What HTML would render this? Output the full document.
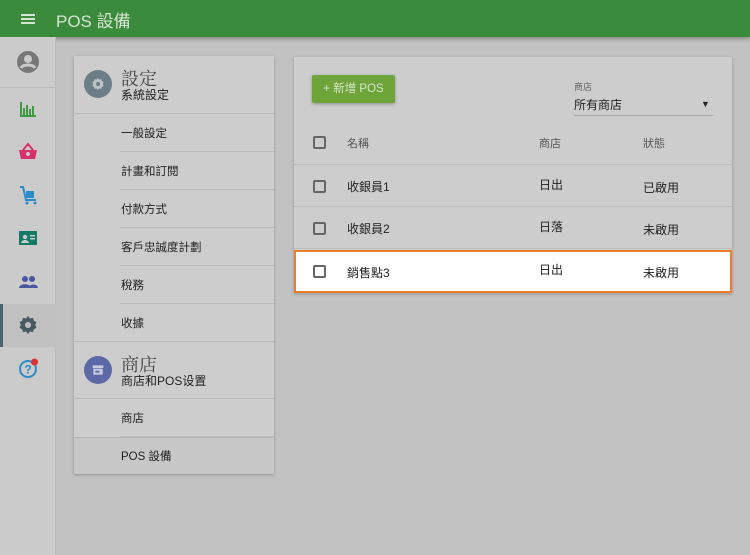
<!DOCTYPE html>
<html><head><meta charset="utf-8"><style>
*{box-sizing:border-box;margin:0;padding:0}
body{width:750px;height:555px;overflow:hidden;background:#c2c2c2;font-family:"Liberation Sans","Noto Sans CJK TC",sans-serif;color:#222;position:relative}
.hdr{position:absolute;left:0;top:0;width:750px;height:37px;background:#3a8b3c;box-shadow:0 2px 4px rgba(0,0,0,.3)}
.hdr .t{position:absolute;left:56px;top:7px;font-size:17px;color:#d7e6d3}
.side{position:absolute;left:0;top:37px;width:56px;height:518px;background:#cbcbcb;border-right:1px solid #bdbdbd}
.ic{position:absolute;left:16px;width:24px;height:24px}
.card{position:absolute;background:#cdcdcd;box-shadow:0 1px 3px rgba(0,0,0,.25)}
.sec{position:absolute;left:0;width:200px;height:58px;border-bottom:1px solid #bababa}
.sec .circ{position:absolute;left:10px;top:14px;width:28px;height:28px;border-radius:50%}
.sec .h{position:absolute;left:47px;top:9px;font-size:18px;color:#444;font-family:"Liberation Serif","Noto Serif CJK SC",serif}
.sec .s{position:absolute;left:47px;top:30px;font-size:12px;color:#222}
.it{position:absolute;left:46px;width:154px;height:38px;border-bottom:1px solid #bababa;font-size:11.5px;padding:11px 0 0 1px}
.cb{position:absolute;left:19px;width:13px;height:13px;border:2px solid #666;border-radius:2px}
.row{position:absolute;left:0;width:438px;height:42px;border-bottom:1px solid #bcbcbc;font-size:12px}
.row span{position:absolute}
</style></head><body>
<div class="hdr">
<div style="position:absolute;left:21px;top:14px;width:14px;height:2px;background:#d7e6d3;box-shadow:0 4px 0 #d7e6d3,0 8px 0 #d7e6d3"></div>
<div class="t">POS 設備</div></div>
<div class="side">
<svg class="ic" style="top:13px" viewBox="0 0 24 24"><circle cx="12" cy="12" r="11" fill="#777"/><circle cx="12" cy="9" r="4" fill="#cbcbcb"/><path d="M5 18c2-4 12-4 14 0" stroke="#cbcbcb" stroke-width="3" fill="none"/></svg>
<div style="position:absolute;left:0;top:50px;width:56px;border-top:1px solid #bbb"></div>
<svg class="ic" style="top:60px" viewBox="0 0 24 24"><path d="M5 5v14h15M8 11v7M11 8v10M14 12v6M17 9v9" stroke="#3e9b44" stroke-width="2" fill="none"/></svg>
<svg class="ic" style="top:103px" viewBox="0 0 24 24"><path d="M3 10h18l-2 9H5z" fill="#d8306a"/><path d="M7 10l5-6 5 6" stroke="#d8306a" stroke-width="2" fill="none"/><circle cx="12" cy="14" r="2" fill="#cbcbcb"/></svg>
<svg class="ic" style="top:146px" viewBox="0 0 24 24"><path d="M4 4h3l3 13h10" stroke="#2a8bc8" stroke-width="2" fill="none"/><rect x="10" y="8" width="8" height="7" fill="#2a8bc8"/><circle cx="11" cy="20" r="1.5" fill="#2a8bc8"/><circle cx="19" cy="20" r="1.5" fill="#2a8bc8"/></svg>
<svg class="ic" style="top:189px" viewBox="0 0 24 24"><rect x="3" y="5" width="18" height="14" fill="#137a66"/><circle cx="9" cy="11" r="2.2" fill="#cbcbcb"/><path d="M5 17c1-4 7-4 8 0z" fill="#cbcbcb"/><rect x="14" y="9" width="5" height="1.5" fill="#cbcbcb"/><rect x="14" y="12" width="5" height="1.5" fill="#cbcbcb"/></svg>
<svg class="ic" style="top:233px" viewBox="0 0 24 24"><circle cx="9" cy="9" r="3" fill="#4b55a0"/><circle cx="16" cy="9" r="3" fill="#4b55a0"/><path d="M3 18c0-5 12-5 12 0zM12 18c0-4 10-5 10 0z" fill="#4b55a0"/></svg>
<div style="position:absolute;left:0;top:267px;width:56px;height:43px;background:#c0c0c0;border-left:3px solid #4a6470"></div>
<svg class="ic" style="top:276px" viewBox="0 0 24 24"><path d="M12 3l2 2.5 3-.8.8 3 2.7 1.4-1.3 2.9 1.3 2.9-2.7 1.4-.8 3-3-.8L12 21l-2-2.5-3 .8-.8-3L3.5 14.9l1.3-2.9-1.3-2.9 2.7-1.4.8-3 3 .8z" fill="#4a5a62"/><circle cx="12" cy="12" r="3" fill="#c0c0c0"/></svg>
<svg class="ic" style="top:319px" viewBox="0 0 24 24"><circle cx="12" cy="13" r="8" stroke="#2a8bc8" stroke-width="2" fill="none"/><text x="12" y="17.5" text-anchor="middle" font-size="12" font-weight="bold" fill="#2a8bc8" font-family="Liberation Sans">?</text><circle cx="18.5" cy="6" r="3.5" fill="#d33"/></svg>
</div>
<div class="card" style="left:74px;top:56px;width:200px;height:418px">
<div class="sec" style="top:0"><div class="circ" style="background:#6c7e86"><svg viewBox="0 0 24 24" width="16" height="16" style="margin:6px"><path d="M12 3l2 2.5 3-.8.8 3 2.7 1.4-1.3 2.9 1.3 2.9-2.7 1.4-.8 3-3-.8L12 21l-2-2.5-3 .8-.8-3L3.5 14.9l1.3-2.9-1.3-2.9 2.7-1.4.8-3 3 .8z" fill="#bfc5c7"/><circle cx="12" cy="12" r="3" fill="#6c7e86"/></svg></div><div class="h">設定</div><div class="s">系統設定</div></div>
<div class="it" style="top:58px">一般設定</div>
<div class="it" style="top:96px">計畫和訂閱</div>
<div class="it" style="top:134px">付款方式</div>
<div class="it" style="top:172px">客戶忠誠度計劃</div>
<div class="it" style="top:210px">稅務</div>
<div class="it" style="top:248px">收據</div>
<div class="sec" style="top:285px;border-top:1px solid #bababa"><div class="circ" style="background:#5d68a6"><svg viewBox="0 0 24 24" width="16" height="16" style="margin:6px"><rect x="4" y="5" width="16" height="4" fill="#c8cbe0"/><rect x="5" y="10" width="14" height="9" fill="#c8cbe0"/><rect x="8" y="13" width="6" height="3" fill="#5d68a6"/></svg></div><div class="h">商店</div><div class="s">商店和POS设置</div></div>
<div class="it" style="top:343px">商店</div>
<div style="position:absolute;left:0;top:381px;width:200px;height:37px;background:#c7c7c7;border-top:1px solid #b5b5b5;font-size:11.5px;padding:10px 0 0 47px">POS 設備</div>
</div>
<div class="card" style="left:294px;top:57px;width:438px;height:236px">
<div style="position:absolute;left:18px;top:18px;width:83px;height:28px;background:#6fa43b;box-shadow:0 1px 3px rgba(0,0,0,.3);color:#d8e6cc;font-size:11.5px;text-align:center;line-height:28px;border-radius:2px">+ 新增 POS</div>
<div style="position:absolute;left:280px;top:23px;font-size:9px;color:#666">商店</div>
<div style="position:absolute;left:280px;top:39px;font-size:12px">所有商店</div>
<div style="position:absolute;left:407px;top:42px;font-size:9px">▼</div>
<div style="position:absolute;left:280px;top:58px;width:139px;border-top:1px solid #a8a8a8"></div>
<div class="row" style="top:66px;height:42px"><div class="cb" style="top:13px"></div><span style="left:53px;top:12px;color:#555;font-size:11px">名稱</span><span style="left:245px;top:12px;color:#555;font-size:11px">商店</span><span style="left:349px;top:12px;color:#555;font-size:11px">狀態</span></div>
<div class="row" style="top:108px"><div class="cb" style="top:15px"></div><span style="left:53px;top:13px">收銀員1</span><span style="left:245px;top:11px">日出</span><span style="left:349px;top:14px">已啟用</span></div>
<div class="row" style="top:150px"><div class="cb" style="top:15px"></div><span style="left:53px;top:13px">收銀員2</span><span style="left:245px;top:11px">日落</span><span style="left:349px;top:14px">未啟用</span></div>
<div class="row" style="top:193px;height:43px;background:#fff;border:2px solid #ec7d2e"><div class="cb" style="top:13px;left:17px"></div><span style="left:51px;top:12px">銷售點3</span><span style="left:243px;top:9px">日出</span><span style="left:347px;top:12px">未啟用</span></div>
</div>
</body></html>
